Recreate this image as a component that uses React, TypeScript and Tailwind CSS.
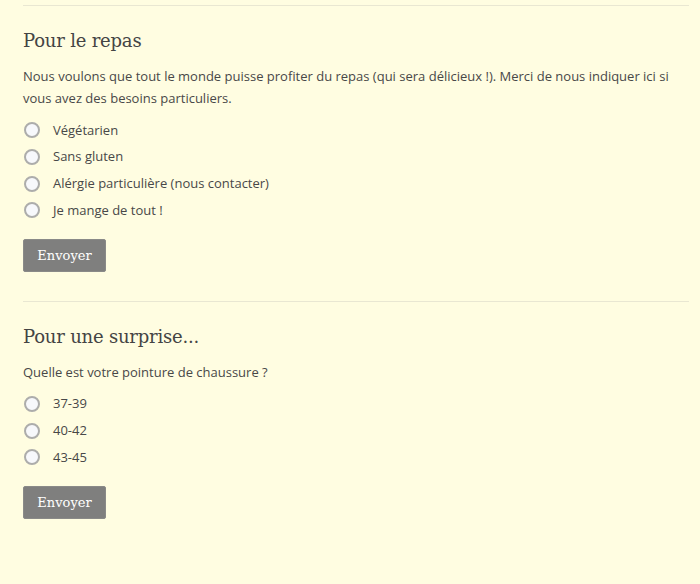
import { useState } from 'react'

const serif = 'font-["DejaVu_Serif","Liberation_Serif",serif]'
const sans = 'font-["Open_Sans","Noto_Sans",sans-serif]'

interface Poll {
  title: string
  question: string
  options: string[]
}

const polls: Poll[] = [
  {
    title: 'Pour le repas',
    question:
      'Nous voulons que tout le monde puisse profiter du repas (qui sera délicieux !). Merci de nous indiquer ici si vous avez des besoins particuliers.',
    options: ['Végétarien', 'Sans gluten', 'Alérgie particulière (nous contacter)', 'Je mange de tout !'],
  },
  {
    title: 'Pour une surprise...',
    question: 'Quelle est votre pointure de chaussure ?',
    options: ['37-39', '40-42', '43-45'],
  },
]

function PollForm({ poll }: { poll: Poll }) {
  const [choice, setChoice] = useState<string | null>(null)

  return (
    <section>
      <div className="h-px bg-[#e9e7d2]" />
      <h2 className={`${serif} mt-[21px] text-[18px] leading-[28px] text-[#444] tracking-[-0.2px]`}>
        {poll.title}
      </h2>
      <p className={`${sans} mt-[10px] text-[13px] leading-[22px] text-[#484848]`}>{poll.question}</p>

      <div className="mt-[8px] flex flex-col">
        {poll.options.map(opt => (
          <label key={opt} className="flex h-[26.7px] items-center cursor-pointer">
            <span className="ml-px flex h-[16px] w-[16px] items-center justify-center rounded-full border-2 border-[#adadab] bg-[#f7f8fb]">
              {choice === opt && <span className="h-[7px] w-[7px] rounded-full bg-[#555]" />}
            </span>
            <input
              type="radio"
              className="hidden"
              checked={choice === opt}
              onChange={() => setChoice(opt)}
            />
            <span className={`${sans} ml-[13px] text-[13px] text-[#484848]`}>{opt}</span>
          </label>
        ))}
      </div>

      <button
        className={`${serif} mt-[15px] h-[33px] w-[83px] rounded-[2px] border border-[#8a8a88] bg-[#7f7f7e] text-[13px] text-white`}
      >
        Envoyer
      </button>
    </section>
  )
}

export default function App() {
  return (
    <div className="min-h-[584px] bg-[#fffde1] pt-[5px] pl-[23px] pr-[11px]">
      <div className="flex flex-col gap-[29px]">
        {polls.map(p => (
          <PollForm key={p.title} poll={p} />
        ))}
      </div>
    </div>
  )
}
